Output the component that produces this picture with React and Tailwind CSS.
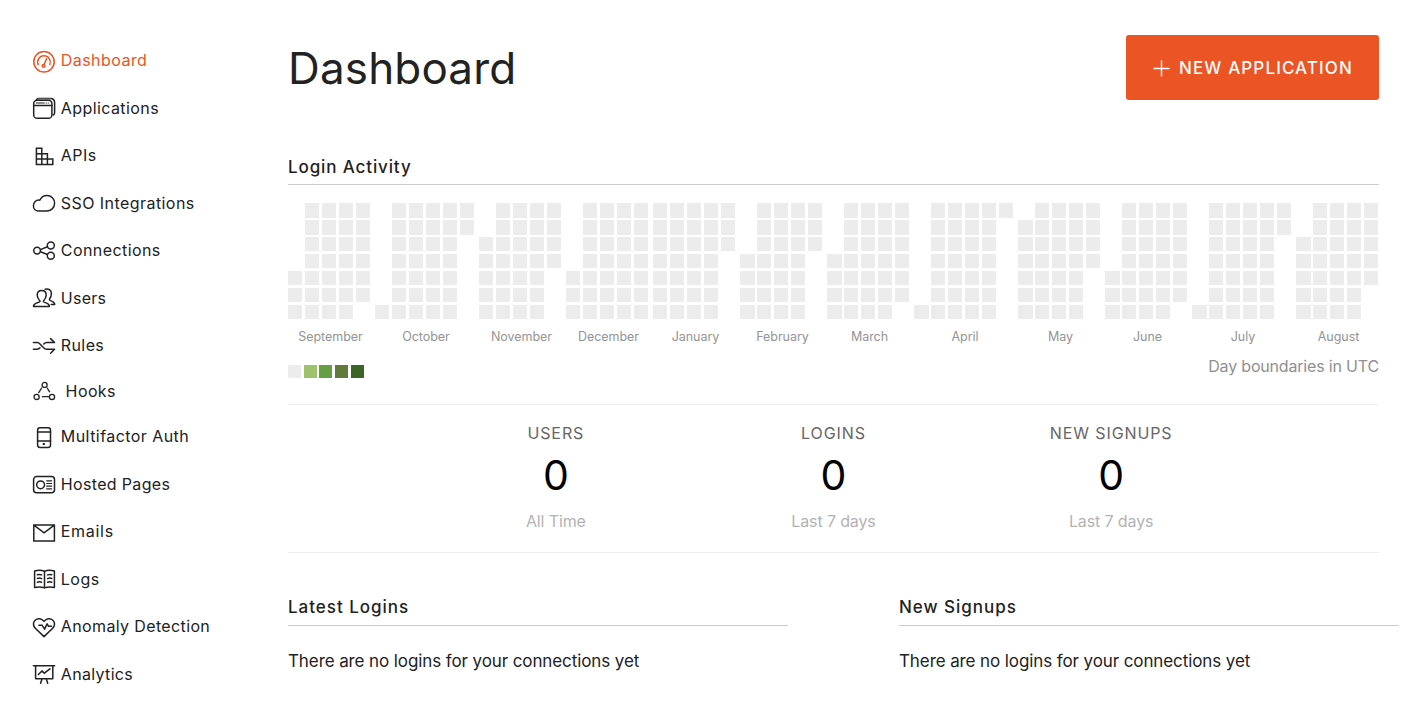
import React from 'react';
import clsx from 'clsx';

function Icon({ children }) {
  return (
    <svg
      className="h-6 w-6 shrink-0"
      viewBox="0 0 24 24"
      fill="none"
      stroke="currentColor"
      strokeWidth="1.5"
      strokeLinecap="round"
      strokeLinejoin="round"
      aria-hidden="true"
    >
      {children}
    </svg>
  );
}

const icons = {
  dashboard: (
    <>
      <circle cx="12" cy="12.8" r="10.2" />
      <path d="M6.2 15.600a6.300 6.300 0 1 1 11.600 0M14.600 9.800l-2.400 5.500" />
      <circle cx="11.500" cy="16.900" r="1.300" />
    </>
  ),
  applications: (
    <>
      <path d="M4.600 3.400Q5.400 2.400 7 2.400h11.400c2.600 0 4.200 1.500 4.200 4.200v9.800c0 1.200-.4 2-1.400 2.600" />
      <path d="M6.500 3.100h12.200" stroke="#9a9a9a" strokeWidth="1" />
      <rect x="1.700" y="4.300" width="18.200" height="18" rx="3.400" fill="#fff" />
      <path d="M2 9.500h17.600" />
      <path d="M4.400 7h7.800M14.200 7h.2M16.200 7h.2" strokeWidth="1.200" />
    </>
  ),
  apis: <path d="M4.400 4.300h5.400v16.200H4.400zM4.400 9.700h11v10.800M4.400 15.100h16.400v5.400H4.400M9.800 15.100v5.400" strokeLinejoin="miter" />,
  sso: (
    <path d="M6.300 20h8.200c4.600 0 8.100-3.200 8.100-7.700 0-4.400-3.300-7.800-7.600-7.800-3.200 0-5.900 1.900-7.200 4.700C4 8.600 1.400 11.300 1.400 14.800c0 3 2.200 5.200 4.900 5.200z" />
  ),
  connections: (
    <>
      <circle cx="5.100" cy="11.600" r="3.400" />
      <circle cx="18.800" cy="6.400" r="3.500" />
      <circle cx="18.800" cy="16.800" r="3.500" />
      <path d="M8.400 10.600l7-2.900M8.400 12.800l7 2.700" />
    </>
  ),
  users: (
    <>
      <path d="M8.100 15.200C6.200 13.200 5.200 11 5.200 9c0-2.900 1.800-4.600 4.500-4.600S14.200 6.100 14.200 9c0 2-1 4.200-2.900 6.200 0 .9.6 1.100 2.700 1.700 2.400.7 3.400 1.400 3.400 3.600H1.500c0-2.200 1-2.900 3.500-3.600 2.200-.6 3.100-.8 3.100-1.700z" />
      <path d="M13.200 3.300c3.800-.9 6.200 1 6.200 4.500 0 2-.7 3.700-2 5.400 0 1 .6 1.400 2.200 1.900 2 .7 3.100 1.500 3.100 3.500h-3.500" />
    </>
  ),
  rules: (
    <path d="M1.400 8.600h3.800c1.200 0 2 .5 2.800 1.400l3.600 3.700c.9.900 1.700 1.500 3 1.500h8l-4 4M1.400 15.200h3.800c1.200 0 2-.5 2.800-1.400M11.800 10c.8-.9 1.600-1.400 2.800-1.400h8l-4-4" />
  ),
  hooks: (
    <g strokeWidth="1.300">
      <circle cx="12.600" cy="5.900" r="2.500" />
      <circle cx="4.600" cy="17.900" r="2.600" />
      <circle cx="20" cy="17.900" r="2.600" />
      <path d="M9.600 9l-2.900 4.700M15.200 9l2.400 3.800M10.400 17.700h6" />
    </g>
  ),
  multifactor: (
    <>
      <rect x="5.600" y="2.700" width="12.900" height="19.700" rx="2.400" />
      <path d="M5.600 6.900h12.900M5.600 15.900h12.900" />
      <rect x="11.400" y="18.500" width="1.200" height="1" fill="currentColor" strokeWidth="1" />
    </>
  ),
  hosted: (
    <>
      <rect x="1.600" y="4.600" width="20.900" height="16.200" rx="3" />
      <circle cx="8.600" cy="12.800" r="3.900" />
      <path d="M14.700 8.800h4.900M14.700 11.500h4.900M14.700 14.200h4.900M14.700 16.900h4.900" strokeWidth="1.200" />
    </>
  ),
  emails: <path d="M1.800 5h20.600v15.900H1.800zM2.200 5.400L12.100 12.900 22 5.400" strokeLinejoin="miter" />,
  logs: (
    <>
      <path d="M2.600 4C6 2.900 9.600 2.900 12.500 4.300 15.400 2.900 19 2.900 22.400 4v16.500c-3.400-.8-7-.8-9.900.4-2.900-1.200-6.500-1.200-9.900-.4zM12.500 4.300v16.600" />
      <path d="M5.400 7.800c1.500-.6 2.900-.5 4.200.1M5.400 11.500c1.500-.6 2.900-.5 4.200.1M5.400 15.200c1.500-.6 2.900-.5 4.200.1M15.600 7.900c1.300-.6 2.700-.7 4.200-.1M15.600 11.600c1.300-.6 2.700-.7 4.200-.1M15.600 15.300c1.300-.6 2.700-.7 4.200-.1" />
    </>
  ),
  anomaly: (
    <>
      <path d="M12 21.600L3.300 13.200C.9 10.800.9 7.400 3.100 5.300 5.600 3 9.600 3.300 12 6.400c2.400-3.100 6.400-3.400 8.900-1.100 2.200 2.100 2.200 5.500-.2 7.900z" />
      <path d="M7 10.200h3l2.600 3.900 2.500-5.200 1.500 2.400h3" />
    </>
  ),
  analytics: (
    <>
      <path d="M1.400 3.700h21.200M3.600 3.900v12.900h17.200V3.900M10 17l-1.400 4.200M14.300 17l1.400 4.200" />
      <path d="M6.400 12.500l3.500-3.600 2.400 2.300 5.600-4.400" />
    </>
  ),
};

const nav = [
  { icon: 'dashboard', label: 'Dashboard', tracking: 'tracking-[0.45px]', active: true },
  { icon: 'applications', label: 'Applications', tracking: 'tracking-[0.41px]' },
  { icon: 'apis', label: 'APIs', tracking: 'tracking-[0.48px]' },
  { icon: 'sso', label: 'SSO Integrations', tracking: 'tracking-[0.44px]' },
  { icon: 'connections', label: 'Connections', tracking: 'tracking-[0.42px]' },
  { icon: 'users', label: 'Users', tracking: 'tracking-[0.25px]' },
  { icon: 'rules', label: 'Rules', tracking: 'tracking-[0.4px]' },
  { icon: 'hooks', label: 'Hooks', tracking: 'tracking-[0.4px]', short: true },
  { icon: 'multifactor', label: 'Multifactor Auth', tracking: 'tracking-[0.44px]' },
  { icon: 'hosted', label: 'Hosted Pages', tracking: 'tracking-[0.34px]' },
  { icon: 'emails', label: 'Emails', tracking: 'tracking-[0.7px]' },
  { icon: 'logs', label: 'Logs', tracking: 'tracking-[0.5px]' },
  { icon: 'anomaly', label: 'Anomaly Detection', tracking: 'tracking-[0.37px]' },
  { icon: 'analytics', label: 'Analytics', tracking: 'tracking-[0.33px]' },
];

// start: weekday row on which the month's first day falls
const months = [
  { name: 'September', start: 4, days: 30 },
  { name: 'October', start: 6, days: 31 },
  { name: 'November', start: 2, days: 30 },
  { name: 'December', start: 4, days: 31 },
  { name: 'January', start: 0, days: 31 },
  { name: 'February', start: 3, days: 28 },
  { name: 'March', start: 3, days: 31 },
  { name: 'April', start: 6, days: 30 },
  { name: 'May', start: 1, days: 31 },
  { name: 'June', start: 4, days: 30 },
  { name: 'July', start: 6, days: 31 },
  { name: 'August', start: 2, days: 31 },
];

const stats = [
  { title: 'USERS', value: 0, period: 'All Time' },
  { title: 'LOGINS', value: 0, period: 'Last 7 days' },
  { title: 'NEW SIGNUPS', value: 0, period: 'Last 7 days' },
];

function Sidebar() {
  return (
    <nav className="w-[288px] shrink-0 pt-[36.75px] pl-8">
      {nav.map((item) => (
        <a
          key={item.label}
          className={clsx(
            'flex items-center text-base leading-6',
            item.short ? 'h-[43.5px] gap-[9.6px]' : 'h-[47.5px] gap-[4.8px]',
            item.active ? 'text-[#eb5424]' : 'text-[#222]',
          )}
        >
          <Icon>{icons[item.icon]}</Icon>
          <span className={clsx('pb-[0.5px]', item.tracking)}>{item.label}</span>
        </a>
      ))}
    </nav>
  );
}

function Month({ name, start, days, wide }) {
  const columns = Math.ceil((start + days) / 7);
  return (
    <div>
      <div className="grid grid-flow-col auto-cols-[17px] grid-rows-[repeat(7,17px)]">
        {Array.from({ length: columns * 7 }, (_, i) => {
          const filled = i >= start && i < start + days;
          return (
            <div
              key={i}
              className={clsx(
                filled && 'bg-[#ececec]',
                i % 7 < 2 ? 'h-[15px]' : 'h-[14px]',
                wide && i < 7 ? 'w-[15px]' : 'w-[14px]',
              )}
            />
          );
        })}
      </div>
      <div className="mt-1.5 text-center text-[12.5px] leading-[18px] tracking-[-0.04px] text-[#949494]">{name}</div>
    </div>
  );
}

function SectionTitle({ children }) {
  return (
    <h2 className="h-[31px] border-b border-[#ccc] text-[17px] leading-[26px] font-medium tracking-[0.88px] text-[#222]">
      {children}
    </h2>
  );
}

function Panel({ title, message }) {
  return (
    <section className="w-[500px] shrink-0">
      <h2 className="h-8 border-b border-[#ccc] text-[17px] leading-[26px] font-medium tracking-[0.98px] text-[#222]">
        {title}
      </h2>
      <p className="mt-[23px] text-[17px] leading-6 tracking-[-0.1px] text-[#222]">{message}</p>
    </section>
  );
}

export default function App() {
  return (
    <div className="flex h-[703px] w-[1418px] overflow-hidden bg-white font-['Inter',sans-serif]">
      <Sidebar />
      <main className="w-[1091px] shrink-0 pt-[35px]">
        <header className="flex h-[65px] items-center justify-between">
          <h1 className="pt-0.5 text-[44px] leading-[65px] tracking-[0.15px] text-[#222]">Dashboard</h1>
          <button className="flex h-[65px] w-[253px] items-center rounded-[3px] bg-[#eb5424] pt-px pl-[27px] text-[17px] font-medium tracking-[1.12px] whitespace-nowrap text-white">
            <svg className="mr-[9px] h-[17px] w-[17px]" viewBox="0 0 17 17" fill="none" stroke="currentColor" strokeWidth="1.4" aria-hidden="true">
              <path d="M8.500.5v16M.5 8.500h16" />
            </svg>
            <span className="pt-px">NEW APPLICATION</span>
          </button>
        </header>

        <section className="mt-[54px]">
          <SectionTitle>Login Activity</SectionTitle>
          <div className="mt-[18px] flex gap-0.5">
            {months.map((m, i) => (
              <Month key={m.name} {...m} wide={i > 4} />
            ))}
          </div>
          <div className="mt-[8px] flex h-[50px] justify-between">
            <div className="flex gap-[2.7px] pt-[11px]">
              <span className="h-[13px] w-[13px] bg-[#ececec]" />
              <span className="h-[13px] w-[13px] bg-[#9dc26b]" />
              <span className="h-[13px] w-[13px] bg-[#669e45]" />
              <span className="h-[13px] w-[13px] bg-[#637939]" />
              <span className="h-[13px] w-[13px] bg-[#3b6427]" />
            </div>
            <p className="text-base leading-6 tracking-[-0.18px] text-[#909090]">Day boundaries in UTC</p>
          </div>
        </section>

        <section className="h-[149px] border-y border-[#eee]">
          <div className="mx-auto grid w-[833px] grid-cols-3 pt-4 text-center">
            {stats.map((s) => (
              <div key={s.title}>
                <h3 className="text-base leading-6 tracking-[0.9px] text-[#666]">{s.title}</h3>
                <p className="mt-[6px] text-[41px] leading-[48px] text-black">{s.value}</p>
                <p className="mt-[10px] text-base leading-6 tracking-[-0.12px] text-[#b3b3b3]">{s.period}</p>
              </div>
            ))}
          </div>
        </section>

        <div className="mt-[41px] flex gap-[111px]">
          <Panel title="Latest Logins" message="There are no logins for your connections yet" />
          <Panel title="New Signups" message="There are no logins for your connections yet" />
        </div>
      </main>
    </div>
  );
}
